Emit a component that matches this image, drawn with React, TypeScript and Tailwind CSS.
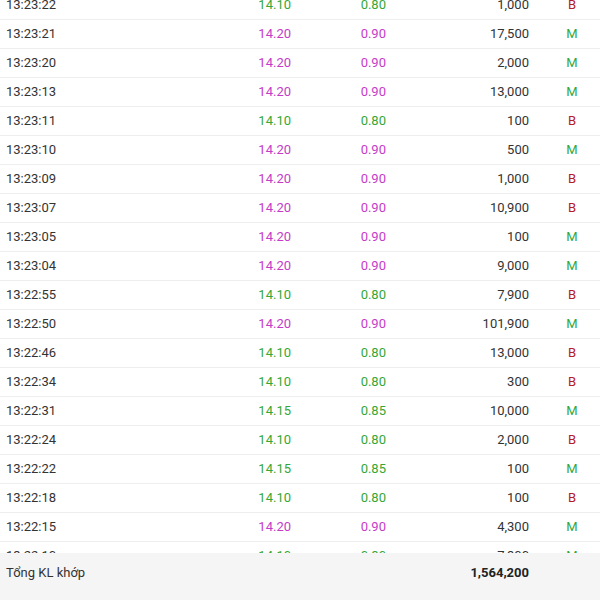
import React from 'react';

type Trade = {
  time: string;
  price: string;
  change: string;
  volume: string;
  side: 'B' | 'M';
};

const trades: Trade[] = [
  { time: '13:23:22', price: '14.10', change: '0.80', volume: '1,000', side: 'B' },
  { time: '13:23:21', price: '14.20', change: '0.90', volume: '17,500', side: 'M' },
  { time: '13:23:20', price: '14.20', change: '0.90', volume: '2,000', side: 'M' },
  { time: '13:23:13', price: '14.20', change: '0.90', volume: '13,000', side: 'M' },
  { time: '13:23:11', price: '14.10', change: '0.80', volume: '100', side: 'B' },
  { time: '13:23:10', price: '14.20', change: '0.90', volume: '500', side: 'M' },
  { time: '13:23:09', price: '14.20', change: '0.90', volume: '1,000', side: 'B' },
  { time: '13:23:07', price: '14.20', change: '0.90', volume: '10,900', side: 'B' },
  { time: '13:23:05', price: '14.20', change: '0.90', volume: '100', side: 'M' },
  { time: '13:23:04', price: '14.20', change: '0.90', volume: '9,000', side: 'M' },
  { time: '13:22:55', price: '14.10', change: '0.80', volume: '7,900', side: 'B' },
  { time: '13:22:50', price: '14.20', change: '0.90', volume: '101,900', side: 'M' },
  { time: '13:22:46', price: '14.10', change: '0.80', volume: '13,000', side: 'B' },
  { time: '13:22:34', price: '14.10', change: '0.80', volume: '300', side: 'B' },
  { time: '13:22:31', price: '14.15', change: '0.85', volume: '10,000', side: 'M' },
  { time: '13:22:24', price: '14.10', change: '0.80', volume: '2,000', side: 'B' },
  { time: '13:22:22', price: '14.15', change: '0.85', volume: '100', side: 'M' },
  { time: '13:22:18', price: '14.10', change: '0.80', volume: '100', side: 'B' },
  { time: '13:22:15', price: '14.20', change: '0.90', volume: '4,300', side: 'M' },
  { time: '13:22:10', price: '14.10', change: '0.80', volume: '7,300', side: 'M' },
];

const TradeRow = ({ trade }: { trade: Trade }) => {
  // 14.20 is the ceiling price -> magenta, everything else is up -> green
  const priceColor = trade.price === '14.20' ? 'text-[#c43cc8]' : 'text-[#36a736]';
  return (
    <div className="flex h-[29px] shrink-0 items-center border-b border-[#eeeeee] text-[13px]">
      <span className="w-[150px] pl-[6px] text-[#333333]">{trade.time}</span>
      <span className={`w-[141px] text-right ${priceColor}`}>{trade.price}</span>
      <span className={`w-[95px] text-right ${priceColor}`}>{trade.change}</span>
      <span className="w-[143px] text-right text-[#333333]">{trade.volume}</span>
      <span
        className={
          trade.side === 'B'
            ? 'ml-[28px] w-[30px] text-center text-[#b3202a]'
            : 'ml-[28px] w-[30px] text-center text-[#36a736]'
        }
      >
        {trade.side}
      </span>
    </div>
  );
};

const App = () => {
  return (
    <div className="flex h-[600px] w-[600px] flex-col overflow-hidden bg-white font-['Roboto',sans-serif]">
      <div className="min-h-0 flex-1 overflow-hidden">
        <div className="-mt-[9px] flex flex-col">
          {trades.map((t) => (
            <TradeRow key={t.time} trade={t} />
          ))}
        </div>
      </div>
      <div className="flex h-[47px] shrink-0 items-center bg-[#f5f5f5] pb-[8px] text-[13px] text-[#333333]">
        <span className="w-[386px] pl-[6px]">Tổng KL khớp</span>
        <span className="w-[143px] text-right font-bold text-[#222222]">1,564,200</span>
      </div>
    </div>
  );
};

export default App;
